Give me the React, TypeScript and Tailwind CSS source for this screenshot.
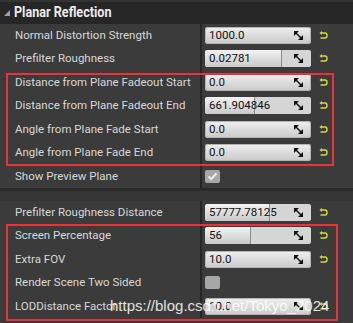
import React from "react"

type Row = {
  label: string
  value?: string
  fill?: number
  check?: "on" | "off"
}

const top: Row[] = [
  { label: "Normal Distortion Strength", value: "1000.0" },
  { label: "Prefilter Roughness", value: "0.02781", fill: 73 },
  { label: "Distance from Plane Fadeout Start", value: "0.0" },
  { label: "Distance from Plane Fadeout End", value: "661.904846", fill: 47 },
  { label: "Angle from Plane Fade Start", value: "0.0" },
  { label: "Angle from Plane Fade End", value: "0.0" },
  { label: "Show Preview Plane", check: "on" },
]

const bottom: Row[] = [
  { label: "Prefilter Roughness Distance", value: "57777.78125", fill: 61 },
  { label: "Screen Percentage", value: "56", fill: 43 },
  { label: "Extra FOV", value: "10.0" },
  { label: "Render Scene Two Sided", check: "off" },
  { label: "LODDistance Factor", value: "10.0" },
]

function DragIcon() {
  return (
    <svg width="9" height="9" viewBox="0 0 9 9" className="shrink-0">
      <polygon points="0,0 5,0 0,5" fill="#111" />
      <polygon points="9,9 4,9 9,4" fill="#111" />
      <line x1="1.5" y1="1.5" x2="7.5" y2="7.5" stroke="#111" strokeWidth="1.4" />
    </svg>
  )
}

function ResetIcon() {
  return (
    <svg width="9" height="9" viewBox="0 0 9 9">
      <path d="M2.5 2 H6 Q8 2 8 4.5 Q8 7 6 7 H1.5" fill="none" stroke="#d6d63a" strokeWidth="1.4" />
      <polygon points="0.5,2 3,0 3,4" fill="#d6d63a" />
    </svg>
  )
}

function NumberBox({ value, fill }: { value: string; fill?: number }) {
  return (
    <div className="relative flex items-center w-[106px] h-[17px] rounded-[3px] overflow-hidden bg-gradient-to-b from-[#efefef] to-[#c9c9c9] shadow-[inset_0_0_0_1px_#b4b4b4]">
      {fill !== undefined && (
        <>
          <div className="absolute inset-0 bg-[#d5d5d5]" />
          <div
            className="absolute left-0 top-0 bottom-0 bg-gradient-to-b from-[#f3f3f3] to-[#c9c9c9] border-r border-[#8a8a8a]"
            style={{ width: `${fill}%` }}
          />
        </>
      )}
      <span className="relative pl-[4px] flex-1 text-[11.5px] text-[#111] leading-none">{value}</span>
      <span className="relative pr-[8px]">
        <DragIcon />
      </span>
    </div>
  )
}

function Check({ on }: { on: boolean }) {
  return (
    <div className="w-[15px] h-[13px] rounded-[2px] bg-[#a7a7a7] flex items-center justify-center">
      {on && (
        <svg width="11" height="9" viewBox="0 0 11 9">
          <path d="M1.5 4.5 L4.2 7 L9.5 1.5" fill="none" stroke="#ececec" strokeWidth="2" />
        </svg>
      )}
    </div>
  )
}

function PropRow({ row }: { row: Row }) {
  return (
    <div className="flex h-[23.5px]">
      <div className="w-[202px] shrink-0 pl-[15px] flex items-center border-r-2 border-[#262626] text-[11.5px] text-[#d8d8d8] whitespace-nowrap overflow-hidden">
        {row.label}
      </div>
      <div className="flex items-center pl-[3px]">
        {row.check ? (
          <Check on={row.check === "on"} />
        ) : (
          <>
            <NumberBox value={row.value!} fill={row.fill} />
            <span className="ml-[8px] flex">
              <ResetIcon />
            </span>
          </>
        )}
      </div>
    </div>
  )
}

export default function App() {
  return (
    <div
      className="relative w-[353px] h-[323px] overflow-hidden bg-[#3b3b3b]"
      style={{ fontFamily: "Roboto, 'Noto Sans', sans-serif" }}
    >
      {/* header */}
      <div className="h-[23.5px] flex items-center bg-[#262626] border-t-2 border-[#333]">
        <svg width="8" height="8" viewBox="0 0 8 8" className="ml-[3px] mr-[3px] shrink-0">
          <polygon points="7,1 7,7 1,7" fill="#a0a0a0" />
        </svg>
        <span className="inline-block text-[14px] font-bold text-[#ececec] whitespace-nowrap origin-left scale-x-[0.9]">
          Planar Reflection
        </span>
      </div>

      <div className="flex flex-col">
        {top.map((r) => (
          <PropRow key={r.label} row={r} />
        ))}
      </div>

      <div className="h-[12.5px] bg-[#363636] border-t-[3px] border-[#2a2a2a]" />

      <div className="flex flex-col">
        {bottom.map((r) => (
          <PropRow key={r.label} row={r} />
        ))}
      </div>

      {/* annotations */}
      <div className="absolute left-[6px] top-[73px] w-[328px] h-[93px] border-2 border-[#e8333a]" />
      <div className="absolute left-[6px] top-[224px] w-[332px] h-[97px] border-2 border-[#e8333a]" />

      <div
        className="absolute left-[110px] top-[295px] text-[15px] text-white/85 whitespace-nowrap"
        style={{ fontFamily: "'Liberation Sans', Arial, sans-serif" }}
      >
        https://blog.csdn.net/Tokyo_2024
      </div>
    </div>
  )
}
